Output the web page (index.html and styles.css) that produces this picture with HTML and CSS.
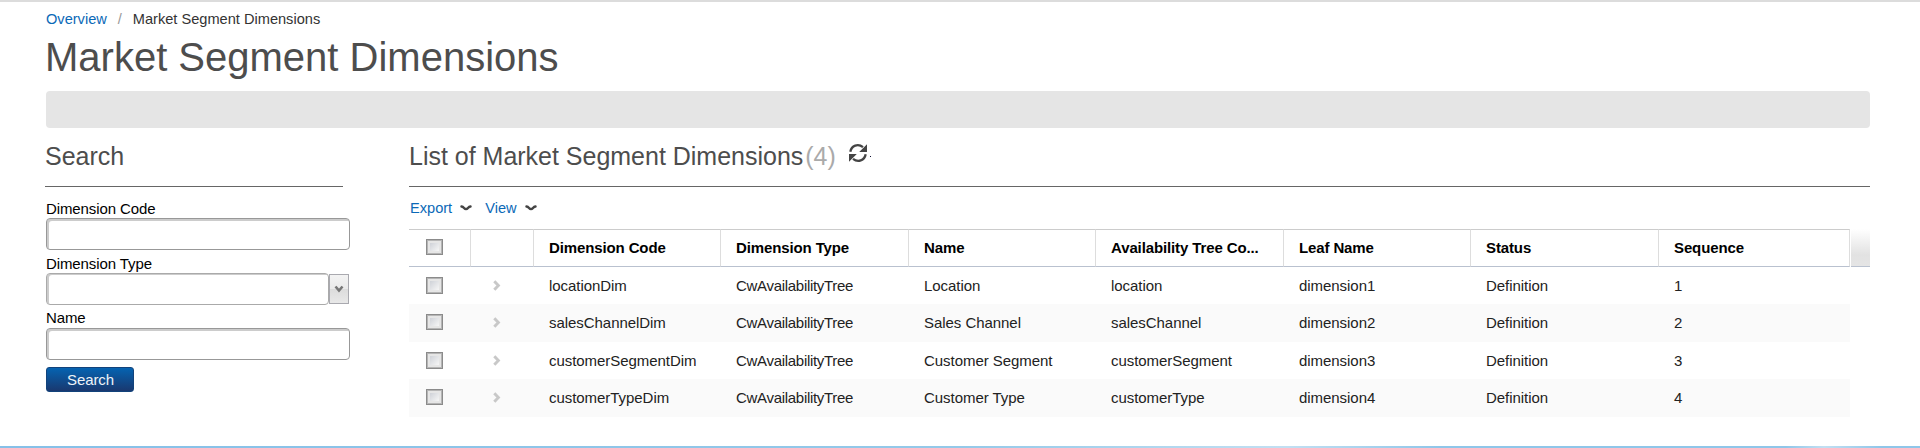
FILE: index.html
```html
<!DOCTYPE html>
<html lang="en">
<head>
<meta charset="utf-8">
<title>Market Segment Dimensions</title>
<link rel="stylesheet" href="styles.css">
</head>
<body>
<svg class="defs" width="0" height="0" aria-hidden="true">
  <symbol id="down" viewBox="0 0 12 8"><path d="M1.500 2.500 Q2.800 2.700 4 4 Q6 6.200 8 4 Q9.200 2.700 10.500 2.500" fill="none" stroke="#444" stroke-width="2.500" stroke-linecap="round"/></symbol>
  <symbol id="right" viewBox="0 0 8 11"><path d="M1.300 1.200 L5.400 5.500 L1.300 9.800" fill="none" stroke="#c8c8c8" stroke-width="2.900"/></symbol>
</svg>
<div class="page">
  <nav class="crumbs"><a href="#">Overview</a><span class="slash">/</span><span>Market Segment Dimensions</span></nav>
  <h1>Market Segment Dimensions</h1>
  <div class="bar"></div>
  <div class="columns">
    <aside class="search">
      <h2>Search</h2>
      <form>
        <label for="code">Dimension Code</label>
        <input id="code" class="field" type="text">
        <label for="type">Dimension Type</label>
        <div class="combo">
          <input id="type" class="field light" type="text">
          <button type="button" class="drop"><svg width="10" height="8" viewBox="0 0 10 8"><path d="M1.500 1.500 L5 5.500 L8.500 1.500" fill="none" stroke="#777" stroke-width="2.600"/></svg></button>
        </div>
        <label for="name" class="name">Name</label>
        <input id="name" class="field" type="text">
        <button type="button" class="submit">Search</button>
      </form>
    </aside>
    <main class="list">
      <h2>List of Market Segment Dimensions<span class="count">(4)</span><svg class="refresh" width="23" height="18" viewBox="0 0 23 18"><g fill="none" stroke="#444" stroke-width="2.300"><path d="M1.300 7.800 C2.500 1.500 9 -.800 14 3.200"/><path d="M16.700 10.200 C15.500 16.500 9 18.800 4 14.800"/></g><path d="M18 .300 V8 H10.200 Z M0 17.700 V10 H7.800 Z" fill="#444"/><path d="M21 12 h1 v1 h-1z" fill="#113"/></svg></h2>
      <div class="tools">
        <a href="#">Export</a><svg width="12" height="8"><use href="#down"/></svg>
        <a href="#" class="view">View</a><svg width="12" height="8"><use href="#down"/></svg>
      </div>
      <div class="grid">
        <table>
          <colgroup><col class="w62"><col class="w63"><col class="w187"><col class="w188"><col class="w187"><col class="w188"><col class="w187"><col class="w188"><col class="w191"></colgroup>
          <thead><tr><th class="pick"><i class="box"></i></th><th></th><th>Dimension Code</th><th>Dimension Type</th><th>Name</th><th>Availability Tree Co...</th><th>Leaf Name</th><th>Status</th><th>Sequence</th></tr></thead>
          <tbody>
            <tr><td class="pick"><i class="box"></i></td><td class="open"><svg width="8" height="11"><use href="#right"/></svg></td><td>locationDim</td><td class="tree">CwAvailabilityTree</td><td>Location</td><td>location</td><td>dimension1</td><td>Definition</td><td>1</td></tr>
            <tr class="tall"><td class="pick"><i class="box"></i></td><td class="open"><svg width="8" height="11"><use href="#right"/></svg></td><td>salesChannelDim</td><td class="tree">CwAvailabilityTree</td><td>Sales Channel</td><td>salesChannel</td><td>dimension2</td><td>Definition</td><td>2</td></tr>
            <tr><td class="pick"><i class="box"></i></td><td class="open"><svg width="8" height="11"><use href="#right"/></svg></td><td>customerSegmentDim</td><td class="tree">CwAvailabilityTree</td><td>Customer Segment</td><td>customerSegment</td><td>dimension3</td><td>Definition</td><td>3</td></tr>
            <tr class="tall"><td class="pick"><i class="box"></i></td><td class="open"><svg width="8" height="11"><use href="#right"/></svg></td><td>customerTypeDim</td><td class="tree">CwAvailabilityTree</td><td>Customer Type</td><td>customerType</td><td>dimension4</td><td>Definition</td><td>4</td></tr>
          </tbody>
        </table>
        <div class="corner"></div>
      </div>
    </main>
  </div>
  <div class="foot"></div>
</div>
</body>
</html>
```
FILE: styles.css
```css
* { box-sizing: border-box; }
body { margin: 0; background: #fff; color: #000; font: 15px/17px "Liberation Sans", Arial, sans-serif; overflow: hidden; }
a { color: #0b69b7; text-decoration: none; }
.defs { display: block; }
.page { display: flex; flex-direction: column; height: 448px; border-top: 2px solid #dcdcdc; }
.crumbs { display: flex; margin: 8px 0 0 46px; height: 18px; line-height: 18px; font-size: 14.6px; color: #333; white-space: nowrap; }
.slash { width: 26px; text-align: center; color: #999; }
h1 { margin: 6px 0 0 45px; height: 46px; font-size: 40px; line-height: 46px; font-weight: 400; color: #4d4d4d; }
.bar { flex: none; margin: 11px 50px 0 46px; height: 37px; border-radius: 4px; background: #e5e5e5; }
.columns { display: flex; height: 318px; padding: 0 50px 0 45px; }
h2 { display: flex; margin: 0; height: 59px; padding-top: 14px; border-bottom: 1px solid #666; font-size: 25px; line-height: 29px; font-weight: 400; color: #4d4d4d; white-space: nowrap; }
.search { width: 364px; }
.search h2 { width: 298px; }
form { display: flex; flex-direction: column; align-items: flex-start; padding: 13px 0 0 1px; }
label { height: 18px; line-height: 18px; letter-spacing: -.1px; }
.name { line-height: 16px; }
.field { width: 304px; height: 32px; margin: 0 0 5px; border: 1px solid #989898; border-radius: 4px; background: #fff; box-shadow: inset 2px 2px 0 #ccc; outline: 0; }
.combo { display: flex; align-items: flex-start; height: 37px; }
.light { width: 283px; border-color: #aaa; box-shadow: inset 2px 1px 0 #ccc; }
.drop { display: flex; align-items: center; justify-content: center; width: 20px; height: 30px; margin: 1px 0 0; padding: 0; border: 1px solid #a9a9af; background: linear-gradient(#f3f3f3, #eaeaea 49%, #dcdcdc 51%, #e8e8e8); }
.submit { width: 88px; height: 25px; margin: 2px 0 0; padding: 0 0 0 1px; border: 1px solid #12437b; border-radius: 3px; background: linear-gradient(#0563b1, #19386f); color: #eef3f8; font: 15px/22px "Liberation Sans", Arial, sans-serif; letter-spacing: -.1px; }
.list { width: 1461px; }
.list h2 { letter-spacing: -.01px; }
.count { margin-left: 2px; color: #aaa; }
.refresh { margin: 2px 0 0 13px; }
.tools { display: flex; align-items: center; height: 42px; padding-left: 1px; font-size: 14.6px; }
.tools svg { margin: 0 0 0 8px; }
.tools .view { margin-left: 13px; }
.grid { display: flex; }
table { width: 1441px; table-layout: fixed; border-collapse: separate; border-spacing: 0; }
.w62 { width: 62px; } .w63 { width: 63px; } .w187 { width: 187px; } .w188 { width: 188px; } .w191 { width: 191px; }
th { height: 38px; padding: 0 0 2px 15px; border: 1px solid #ccc; border-left: 0; border-right-color: #ddd; border-bottom-color: #b9c1cf; text-align: left; font-weight: 700; letter-spacing: -.12px; white-space: nowrap; }
td { height: 37px; padding: 0 0 0 15px; color: #222; letter-spacing: -.05px; white-space: nowrap; }
.tall td { height: 38px; padding-bottom: 2px; background: #fafafa; }
.tree { letter-spacing: -.3px; }
td.pick, th.pick { padding-left: 17px; }
.box { display: block; width: 17px; height: 17px; border: 1px solid #8b8b8b; background: linear-gradient(135deg, #cfd2d8, #f6f6f6) content-box, #e6e6e6; padding: 3px; box-shadow: inset 0 0 0 1px #b5b5b5; }
.tall .box, th .box { height: 16px; }
td.open { padding-left: 22px; }
.open svg { display: block; }
.corner { width: 19px; height: 38px; margin-left: 1px; border-bottom: 1px solid #b9c1cf; background: linear-gradient(#fff, #e2e2e2 70%, #e5e5e5); }
.foot { flex: none; height: 2px; margin-top: auto; background: linear-gradient(90deg, #86c0e8 0, #94c9e9 50%, #c2dff2 67%, #8fc6e9 75%, #8fc6e9 93%, #c2dff2 95%, #8fc6e9 98%); }
```
